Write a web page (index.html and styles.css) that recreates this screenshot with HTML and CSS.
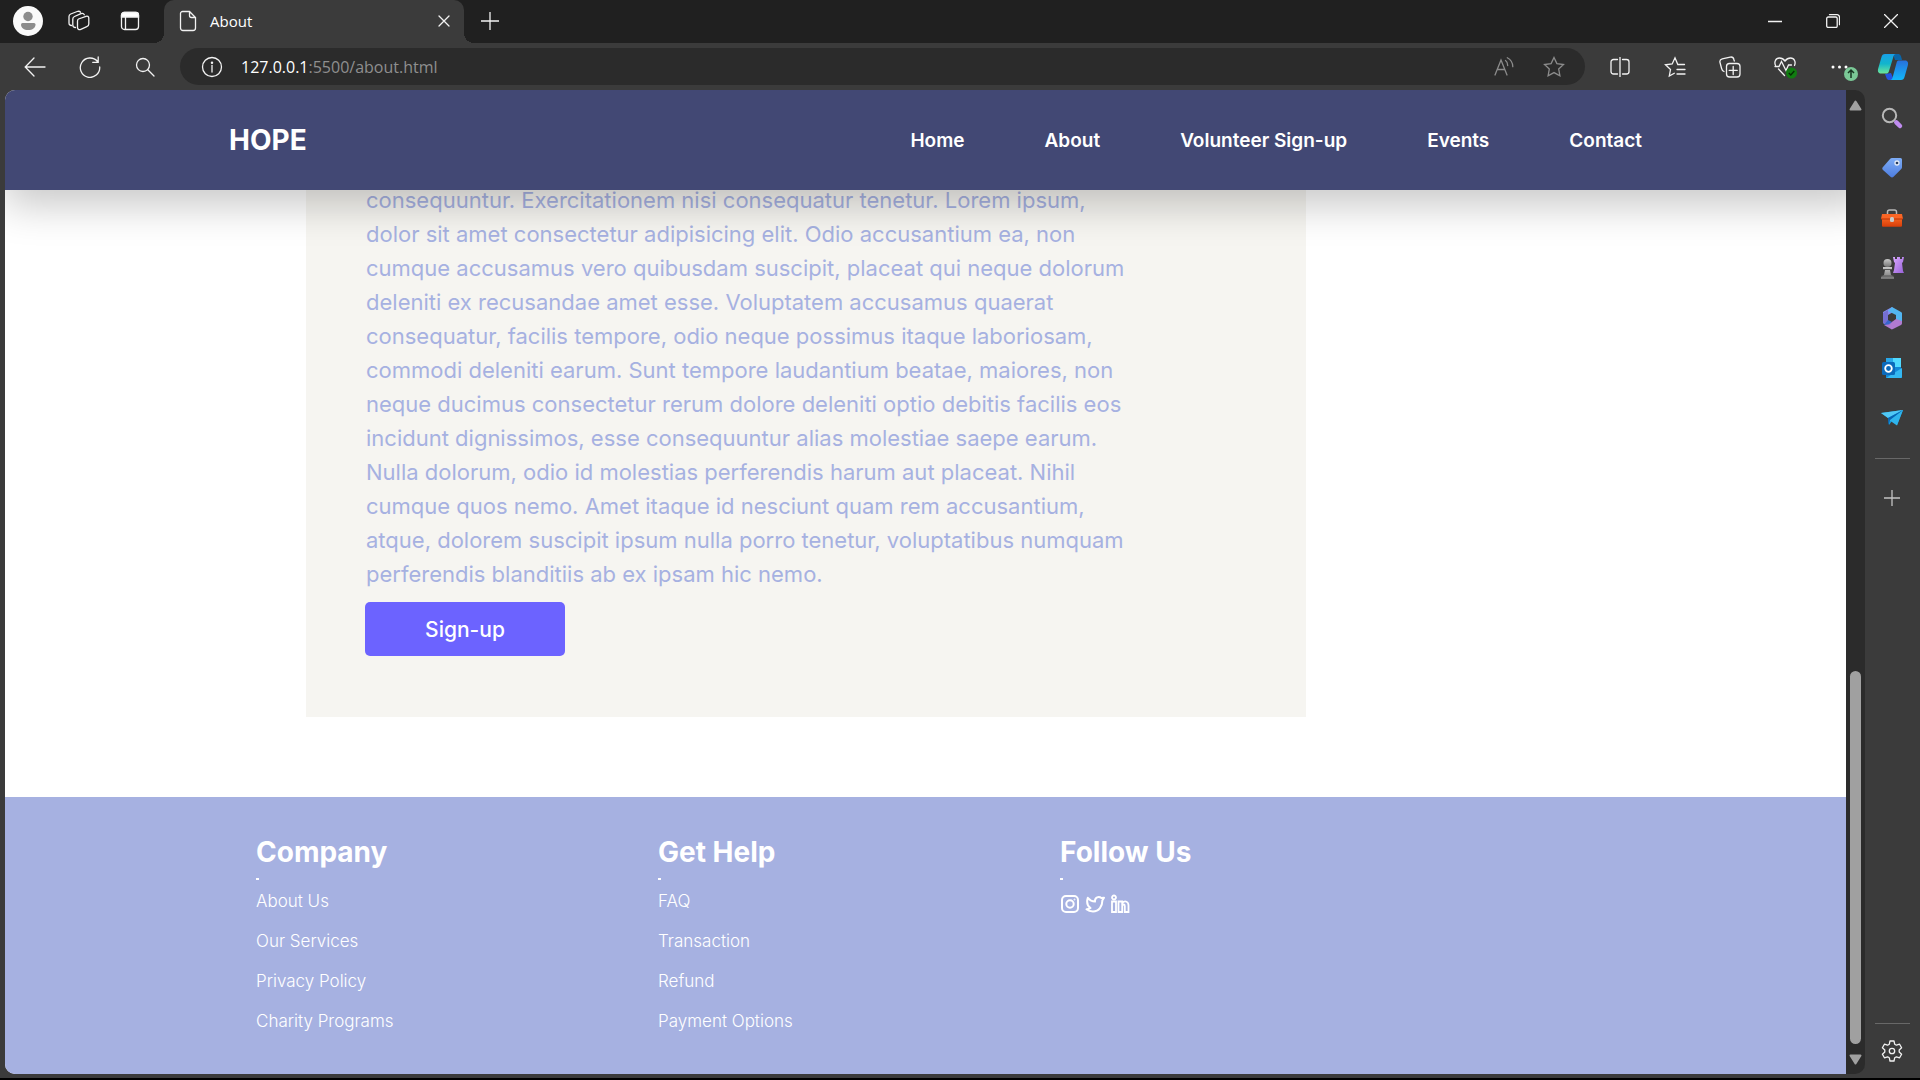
FILE: index.html
```html
<!DOCTYPE html>
<html lang="en">
<head>
<meta charset="utf-8">
<title>About</title>
<link rel="stylesheet" href="styles.css">
</head>
<body>
<div class="titlebar">
  <div class="title-tools">
    <button class="tool" aria-label="Profile"><svg width="30" height="30" viewBox="0 0 30 30"><circle cx="15" cy="15" r="15" fill="#fafafa"/><circle cx="15" cy="10.500" r="4.700" fill="#8c8c8c"/><path d="M9.500 17h11.500a1.500 1.500 0 0 1 1.500 1.500c0 3.500-3 5.500-7.300 5.500S8 22 8 18.500A1.500 1.500 0 0 1 9.500 17z" fill="#8c8c8c"/></svg></button>
    <button class="tool" aria-label="Workspaces"><svg class="line" width="22" height="22" viewBox="0 0 22 22"><path d="M10.500 9l7.500-2.700c1.500-.5 2.800.2 2.800 1.700v6c0 1.500-.8 2.300-2 2.700l-6 2.600c-1.700.7-3.300 0-3.300-1.800v-6.300c0-1 .2-1.800 1-2.200z"/><path d="M7.500 17.500c-1.800 0-2.700-1-2.700-2.500V9c0-1.300.6-2 1.700-2.500L13 3.700c1.400-.6 2.700-.2 3.300 1"/><path d="M3.500 15.500C1.800 15.500 1 14.500 1 13V6.500C1 5.300 1.500 4.500 2.700 4l6.500-2.500c1.300-.5 2.500-.3 3.300.7"/></svg></button>
    <button class="tool" aria-label="Tab actions"><svg class="line" width="20" height="20" viewBox="0 0 20 20"><rect x="1.500" y="1.500" width="17" height="17" rx="3"/><path d="M1.500 6V4a2.500 2.500 0 0 1 2.500-2.500h12A2.500 2.500 0 0 1 18.500 4v2z" fill="#fff"/><path d="M5.500 6v12"/></svg></button>
  </div>
  <div class="tab">
    <svg class="line" width="18" height="22" viewBox="0 0 18 22"><path d="M3.500 1.500h7l6 6v10.500a2.500 2.500 0 0 1-2.500 2.500H4A2.500 2.500 0 0 1 1.500 18V3.500a2 2 0 0 1 2-2zM10.500 1.500v4a2 2 0 0 0 2 2h4"/></svg>
    <span class="tab-title">About</span>
    <button class="tab-close" aria-label="Close tab"><svg class="line" width="12" height="12" viewBox="0 0 12 12"><path d="M1 1l10 10M11 1L1 11"/></svg></button>
  </div>
  <button class="tool new-tab" aria-label="New tab"><svg class="line" width="18" height="18" viewBox="0 0 18 18"><path d="M9 0v18M0 9h18"/></svg></button>
  <div class="window-controls">
    <button aria-label="Minimize"><svg class="line" width="14" height="14" viewBox="0 0 14 14"><path d="M0 7.500h14"/></svg></button>
    <button aria-label="Restore"><svg class="line" width="14" height="14" viewBox="0 0 14 14"><rect x=".7" y="3" width="10.500" height="10.500" rx="1.500"/><path d="M3.500.7h7.500a2.500 2.500 0 0 1 2.500 2.500v7.500"/></svg></button>
    <button aria-label="Close"><svg class="line" width="14" height="14" viewBox="0 0 14 14"><path d="M.5.5l13 13M13.500.5l-13 13"/></svg></button>
  </div>
</div>

<div class="toolbar">
  <button class="nav-tool" aria-label="Back"><svg class="line" width="22" height="20" viewBox="0 0 22 20"><path d="M21 10H1.500M10 1L1.200 10 10 19"/></svg></button>
  <button class="nav-tool" aria-label="Refresh"><svg class="line" width="22" height="22" viewBox="0 0 22 22"><path d="M18.500 5.500A9.700 9.700 0 1 0 20.700 11M19.200 1v5.300h-5.500"/></svg></button>
  <button class="nav-tool" aria-label="Search"><svg class="line" width="20" height="20" viewBox="0 0 20 20"><circle cx="8" cy="8" r="6.500"/><path d="M12.800 12.800l6.200 6.200"/></svg></button>
  <div class="address">
    <svg class="line" width="22" height="22" viewBox="0 0 22 22"><circle cx="11" cy="11" r="9.500"/><path d="M11 9.500v6.500"/><circle cx="11" cy="6.700" r=".6"/></svg>
    <div class="url"><span class="url-host">127.0.0.1</span>:5500/about.html</div>
    <button aria-label="Read aloud"><svg class="line dim" width="20" height="20" viewBox="0 0 20 20"><path d="M1 18L7 3l6 15M3.300 12.500h7.400M11.500 3.500c1.500 1 2.200 2.600 2.200 5M13.300.7c3.600 2 5.500 5 5.500 9"/></svg></button>
    <button aria-label="Add to favorites"><svg class="line dim" width="22" height="22" viewBox="0 0 22 22"><path d="M11 1.500l2.900 6.100 6.600.9-4.800 4.600 1.200 6.700L11 16.600l-5.900 3.200 1.200-6.700L1.500 8.500l6.600-.9z"/></svg></button>
  </div>
  <button class="nav-tool" aria-label="Split screen"><svg class="line" width="20" height="20" viewBox="0 0 20 20"><path d="M7.500 2.500h-4a2.500 2.500 0 0 0-2.500 2.500v9.500A2.500 2.500 0 0 0 3.500 17h4M12.500 2.500h4A2.500 2.500 0 0 1 19 5v9.500a2.500 2.500 0 0 1-2.500 2.500h-4M10 0v20"/></svg></button>
  <button class="nav-tool" aria-label="Favorites"><svg class="line" width="22" height="22" viewBox="0 0 22 22"><path d="M20.500 8.500h-6.700L11 1.800 8.200 8 1.500 8.800l5 4.700-1.200 6.500 5-2.800M13 13.500h8M13 18h8"/></svg></button>
  <button class="nav-tool" aria-label="Collections"><svg class="line" width="22" height="22" viewBox="0 0 22 22"><rect x="7.500" y="7.500" width="13.500" height="13.500" rx="3"/><path d="M14.200 10.500v8M10.200 14.400h8M5 15.500C3.500 15 3 14.200 2.600 12.500L1 6.500C.5 4.500 1.500 3.300 3.200 2.800l8-1.700c2-.4 3.300.5 3.700 2.400l.4 1.500"/></svg></button>
  <button class="nav-tool" aria-label="Browser essentials"><svg width="24" height="24" viewBox="0 0 24 24"><g class="line"><path d="M2.500 10.500C1 7 2.500 3 6.500 3c2.500 0 4 1 5.500 3 1.500-2 3-3 5.500-3 4 0 5.500 4 4 7.500M5.500 14l6 6.500M2 11.500h4l2.500-5 4.500 9 2.500-5.500h3"/></g><circle cx="18.500" cy="18" r="5.500" fill="#107c10"/><path d="M15.800 18l2 2 3.500-4" fill="none" stroke="#052b05" stroke-width="1.300"/></svg></button>
  <button class="nav-tool" aria-label="Settings and more"><svg width="36" height="30" viewBox="0 0 36 30"><g fill="#fff"><circle cx="11" cy="15" r="1.500"/><circle cx="17.500" cy="15" r="1.500"/><circle cx="24" cy="15" r="1.500"/></g><circle cx="29" cy="22" r="7" fill="#7ac896"/><path d="M29 26v-8M26 21l3-3 3 3" fill="none" stroke="#183522" stroke-width="1.500"/></svg></button>
  <button class="copilot" aria-label="Copilot"><svg width="32" height="28" viewBox="0 0 32 28"><defs><linearGradient id="ca" x2="0" y2="1"><stop stop-color="#18a0e8"/><stop offset=".5" stop-color="#12b5cc"/><stop offset="1" stop-color="#6de69a"/></linearGradient><linearGradient id="cb" x2="0" y2="1"><stop stop-color="#2870dc"/><stop offset="1" stop-color="#12b8fa"/></linearGradient></defs><path d="M16 1h5c2.500 0 3 2 4 6h-7z" fill="#0a65a8"/><path d="M14 20l-6 1 1.500 4c.5 1.500 1.500 2 3 2H17z" fill="#2455e0"/><path d="M8 1h11c-2 0-2.500 2-3 4l-4 13c-.5 2-1.500 2.500-3 2.500H4C1 20.500.5 18 1.200 15.500L4.500 4C5 2 6 1 8 1z" fill="url(#ca)"/><path d="M22 7.500h6c3 0 3.500 2.500 2.800 5L27.500 24c-.5 2-1.500 3-3.500 3H13c2 0 2.500-2 3-4l3.500-13c.5-2 1-2.500 2.500-2.500z" fill="url(#cb)"/></svg></button>
</div>

<div class="workspace">
  <div class="viewport">
    <div class="page">
      <header class="site-header">
        <a class="brand" href="#">HOPE</a>
        <nav class="menu">
          <a href="#">Home</a><a href="#">About</a><a href="#">Volunteer Sign-up</a><a href="#">Events</a><a href="#">Contact</a>
        </nav>
      </header>
      <div class="scroll-area">
        <main class="card">
          <p>consequuntur. Exercitationem nisi consequatur tenetur. Lorem ipsum,<br>dolor sit amet consectetur adipisicing elit. Odio accusantium ea, non<br>cumque accusamus vero quibusdam suscipit, placeat qui neque dolorum<br>deleniti ex recusandae amet esse. Voluptatem accusamus quaerat<br>consequatur, facilis tempore, odio neque possimus itaque laboriosam,<br>commodi deleniti earum. Sunt tempore laudantium beatae, maiores, non<br>neque ducimus consectetur rerum dolore deleniti optio debitis facilis eos<br>incidunt dignissimos, esse consequuntur alias molestiae saepe earum.<br>Nulla dolorum, odio id molestias perferendis harum aut placeat. Nihil<br>cumque quos nemo. Amet itaque id nesciunt quam rem accusantium,<br>atque, dolorem suscipit ipsum nulla porro tenetur, voluptatibus numquam<br>perferendis blanditiis ab ex ipsam hic nemo.</p>
          <button class="signup">Sign-up</button>
        </main>
        <footer class="site-footer">
          <section><h2>Company</h2><ul><li><a href="#">About Us</a></li><li><a href="#">Our Services</a></li><li><a href="#">Privacy Policy</a></li><li><a href="#">Charity Programs</a></li></ul></section>
          <section><h2>Get Help</h2><ul><li><a href="#">FAQ</a></li><li><a href="#">Transaction</a></li><li><a href="#">Refund</a></li><li><a href="#">Payment Options</a></li></ul></section>
          <section><h2>Follow Us</h2>
            <div class="social">
              <a href="#" aria-label="Instagram"><svg width="20" height="20" viewBox="0 0 20 20" fill="none" stroke="#fff" stroke-width="2"><rect x="2" y="2" width="16" height="16" rx="4"/><circle cx="10" cy="10" r="3.700"/><circle cx="14.500" cy="5.500" r=".5" stroke-width="1"/></svg></a>
              <a href="#" aria-label="Twitter"><svg width="20" height="20" viewBox="0 0 20 20" fill="none" stroke="#fff" stroke-width="2" stroke-linejoin="round"><path d="M1.500 15.300c1.800 0 3-.3 4-1.200C2.500 12 1.500 8 2.800 3.800 5 6.500 7 7.500 10 7.600 9.700 4.800 11.500 3 13.700 3c1.200 0 2 .4 2.700 1.100L19 3.700l-1.700 2.800C17.500 12 14 17.500 8 17.500c-2.500 0-4.800-.7-6.500-2.200z"/></svg></a>
              <a href="#" aria-label="LinkedIn"><svg width="20" height="20" viewBox="0 0 20 20" fill="none" stroke="#fff" stroke-width="1.800"><circle cx="4" cy="3.500" r="2"/><path d="M2 7.500h4V18H2zM8.500 7.500h3.700V9c3-3 6.300-1.300 6.300 2.500V18h-3.700v-6c0-2-2.600-2-2.600 0v6H8.500z"/></svg></a>
            </div>
          </section>
        </footer>
      </div>
    </div>
    <div class="scrollbar"><svg width="13" height="11" viewBox="0 0 13 11"><path d="M6.500 1.500L11.500 9.500H1.500z" fill="#a0a0a0" stroke="#a0a0a0" stroke-width="2" stroke-linejoin="round"/></svg><div class="thumb"></div><svg width="13" height="11" viewBox="0 0 13 11"><path d="M6.500 9.500L11.500 1.500H1.500z" fill="#a0a0a0" stroke="#a0a0a0" stroke-width="2" stroke-linejoin="round"/></svg></div>
  </div>
  <aside class="sidebar">
    <svg width="0" height="0" class="defs"><defs><linearGradient id="pl" x2="1" y2="1"><stop stop-color="#d9a8ff"/><stop offset="1" stop-color="#9862d8"/></linearGradient><linearGradient id="bl" x2="0" y2="1"><stop stop-color="#7dacf5"/><stop offset="1" stop-color="#4d7de0"/></linearGradient><linearGradient id="or" x2="0" y2="1"><stop stop-color="#f86a26"/><stop offset="1" stop-color="#d83d08"/></linearGradient><linearGradient id="gr" x2="0" y2="1"><stop stop-color="#c8c8c8"/><stop offset="1" stop-color="#747474"/></linearGradient></defs></svg>
    <button aria-label="Search"><svg width="24" height="24" viewBox="0 0 24 24"><circle cx="9.500" cy="9.500" r="6.700" fill="none" stroke="#b8b8b8" stroke-width="2"/><path d="M16.300 16.300l3.700 3.700" stroke="#c08cf0" stroke-width="4.500" stroke-linecap="round"/></svg></button>
    <button aria-label="Shopping"><svg width="22" height="22" viewBox="0 0 22 22"><path d="M11 1h8.500A1.500 1.500 0 0 1 21 2.500V10c0 1-.3 1.600-1 2.300l-7.500 7.500c-1 1-2 1-3 0L2 13c-1-1-1-2 0-3l7-8c.5-.6 1.200-1 2-1z" fill="url(#bl)"/><circle cx="16" cy="6" r="2" fill="#263b5f" stroke="#e3eaf5" stroke-width="1.300"/></svg></button>
    <button aria-label="Tools"><svg width="24" height="20" viewBox="0 0 24 20"><path d="M7.500 6V4a2 2 0 0 1 2-2h5a2 2 0 0 1 2 2v2" fill="none" stroke="#b8b8b8" stroke-width="1.500"/><path d="M2 9h20v8.500c0 .8-.5 1.300-1.300 1.300H3.300c-.8 0-1.300-.5-1.300-1.300z" fill="url(#or)"/><path d="M2 6h20l1 5H1z" fill="#f96525"/><path d="M1 11h22" stroke="#b83205"/><rect x="10" y="9" width="4" height="5" rx="1.500" fill="#cacaca"/></svg></button>
    <button aria-label="Games"><svg width="24" height="24" viewBox="0 0 24 24"><path d="M13 1h2v2h2V1h3v2h2V1h2l-1 5-1 1 1 8 1 2H13l1-3 1-7-1-1z" fill="url(#pl)"/><circle cx="7.500" cy="7" r="4" fill="url(#gr)"/><path d="M3 11h9v3h-2l1 5 3 2v2H1v-2l3-2 1-5H3z" fill="url(#gr)"/><path d="M3 13.500h9M1.500 20h12" stroke="#555"/></svg></button>
    <button aria-label="Microsoft 365"><svg width="22" height="24" viewBox="0 0 22 24"><path d="M11 1L2 6v11l5 3V9l7-4z" fill="#858cf0"/><path d="M11 1l9 5c1 .5 1 1 1 2v9l-6-3V9L7 5z" fill="#52b6f2"/><path d="M21 15v2c0 1-.5 1.600-1 2l-8 4c-1 .5-1.500.5-2 0L3 19l5-1 7-5z" fill="#b17bd0"/><path d="M2 17V7l5-3v11l3 3-4 1z" fill="#756fd2"/><path d="M3 19l5-1 3-2-4-2z" fill="#3765cc"/></svg></button>
    <button aria-label="Outlook"><svg width="22" height="22" viewBox="0 0 22 22"><path d="M5 1h15v12l1-2v10H5z" fill="#1288d8"/><path d="M5 1h7v9H5z" fill="#28a7e9"/><path d="M12 1h8v9h-8z" fill="#50d9ff"/><path d="M21 11L5 21h14c1.500 0 2-.5 2-2z" fill="#34b8f2"/><rect x="1" y="5" width="13" height="13" rx="1.500" fill="#0b6abb"/><circle cx="7.500" cy="11.500" r="3.300" fill="none" stroke="#fff" stroke-width="1.800"/></svg></button>
    <button aria-label="Drop"><svg width="22" height="18" viewBox="0 0 22 18"><path d="M0 4l22-3-6 15-5-4-3 4-1-7z" fill="#159bdd"/><path d="M22 1L8 11l8 5.500z" fill="#2fb4ec"/><path d="M0 4l22-3L7 9z" fill="#50c8f5"/><path d="M7 9L22 1 9 11l-1.500 5z" fill="#0864b2"/></svg></button>
    <hr>
    <button aria-label="Customize"><svg width="16" height="16" viewBox="0 0 16 16"><path d="M8 0v16M0 8h16" stroke="#c4c4c4" stroke-width="1.300"/></svg></button>
    <hr class="push">
    <button aria-label="Settings"><svg class="line" width="22" height="22" viewBox="0 0 22 22"><path d="M9 1h4l.7 3.200 1.700 1 3.200-1 2 3.500-2.400 2.200v2.200l2.400 2.200-2 3.500-3.200-1-1.700 1L13 21H9l-.7-3.200-1.700-1-3.200 1-2-3.500 2.400-2.200V9.900L1.400 7.700l2-3.500 3.200 1 1.700-1z" stroke-linejoin="round"/><circle cx="11" cy="11" r="2.700"/></svg></button>
  </aside>
</div>
</body>
</html>
```

FILE: styles.css
```css
* { box-sizing: border-box; }
body {
  margin: 0;
  height: 100vh;
  display: flex;
  flex-direction: column;
  background: #3b3b3b;
  border-bottom: 2px solid #000;
  overflow: hidden;
  font-family: Inter, "Open Sans", sans-serif;
}
button {
  display: flex;
  align-items: center;
  justify-content: center;
  padding: 0;
  border: 0;
  background: none;
  color: #fff;
  font: inherit;
}
a { color: inherit; text-decoration: none; }
svg { display: block; flex: none; }
.line { fill: none; stroke: #f2f2f2; stroke-width: 1.3; stroke-linecap: round; }
.dim { stroke: #8c8c8c; }

/* Browser chrome */
.titlebar { display: flex; flex: none; height: 43px; background: #202020; }
.title-tools { display: flex; width: 164px; padding-left: 2px; }
.tool { width: 51px; height: 42px; }
.tab {
  position: relative;
  display: flex;
  align-items: center;
  width: 300px;
  padding: 0 14px 2px 15px;
  gap: 13px;
  border-radius: 10px 10px 0 0;
  background: #3b3b3b;
}
.tab::before, .tab::after {
  content: "";
  position: absolute;
  bottom: 0;
  width: 10px;
  height: 10px;
}
.tab::before { right: 100%; background: radial-gradient(circle at 0 0, #202020 10px, #3b3b3b 10px); }
.tab::after { left: 100%; background: radial-gradient(circle at 100% 0, #202020 10px, #3b3b3b 10px); }
.tab-title { flex: 1; color: #fff; font: 15px/20px "Open Sans", sans-serif; }
.window-controls { display: flex; margin-left: auto; }
.window-controls button { width: 58px; height: 42px; }
.toolbar { display: flex; flex: none; align-items: center; height: 47px; padding: 0 1px 0 7px; }
.nav-tool { width: 55px; height: 40px; flex: none; }
.copilot { width: 52px; height: 40px; flex: none; }
.address {
  display: flex;
  flex: 1;
  align-items: center;
  height: 37px;
  margin: 0 7px 0 8px;
  padding: 0 6px 0 21px;
  border-radius: 19px;
  background: #2b2b2b;
}
.address button { width: 50px; height: 37px; }
.url { flex: 1; padding-left: 18px; color: #8f8f8f; font: 16px/24px "Open Sans", sans-serif; }
.url-host { color: #fff; }
.workspace { display: flex; flex: 1; min-height: 0; }
.viewport {
  display: flex;
  flex: 1;
  min-width: 0;
  margin: 0 0 4px 5px;
  border-radius: 10px;
  background: #2b2b2b;
  overflow: hidden;
}
.scrollbar { display: flex; flex-direction: column; align-items: center; width: 19px; padding: 10px 0 9px; }
.thumb { width: 11px; height: 373px; margin: auto 0 10px; border-radius: 6px; background: #a0a0a0; }
.sidebar { display: flex; flex-direction: column; align-items: center; width: 55px; padding: 3px 1px 2px 0; }
.sidebar button { width: 50px; height: 50px; flex: none; }
.sidebar hr { width: 35px; margin: 15px 0 14px; border: 0; border-top: 1px solid #686868; }
.sidebar hr.push { margin: auto 0 2px; }
.defs { position: absolute; }

/* Website */
.page { display: flex; flex: 1; flex-direction: column; min-width: 0; background: #fff; overflow: hidden; }
.site-header {
  position: relative;
  z-index: 1;
  display: flex;
  flex: none;
  align-items: center;
  justify-content: space-between;
  height: 100px;
  margin-right: -20px;
  padding: 0 224px;
  background: #424874;
  box-shadow: 0 15px 40px rgba(0, 0, 0, .22);
  color: #fff;
}
.brand { font-size: 28px; font-weight: 700; }
.menu { display: flex; gap: 80px; font-size: 19px; font-weight: 600; }
.scroll-area { display: flex; flex: 1; flex-direction: column; justify-content: flex-end; min-height: 0; }
.card {
  flex: none;
  width: 1000px;
  max-width: 100%;
  margin: 0 0 80px 301px;
  padding: 0 59px 61px;
  background: #f6f5f1;
}
.card p {
  margin: 0 0 11px;
  padding-left: 1px;
  color: #a6b1e1;
  font-size: 22px;
  font-weight: 400;
  line-height: 34px;
  white-space: nowrap;
}
.signup { width: 200px; height: 54px; border-radius: 5px; background: #6c63ff; font-size: 21px; font-weight: 500; }
.site-footer {
  display: grid;
  flex: none;
  grid-template-columns: repeat(3, minmax(0, 402px));
  padding: 37px 0 41px 251px;
  background: #a6b1e1;
  color: #fff;
}
.site-footer h2 { margin: 0 0 9px; font-size: 28px; line-height: 36px; font-weight: 700; }
.site-footer h2::after { content: ""; display: block; width: 3px; height: 2px; margin-top: 8px; background: #fff; }
.site-footer ul { margin: 0; padding: 0; list-style: none; display: grid; gap: 16px; }
.site-footer li { font-size: 17px; line-height: 24px; font-weight: 300; }
.social { display: flex; gap: 5px; padding-top: 5px; }
```
